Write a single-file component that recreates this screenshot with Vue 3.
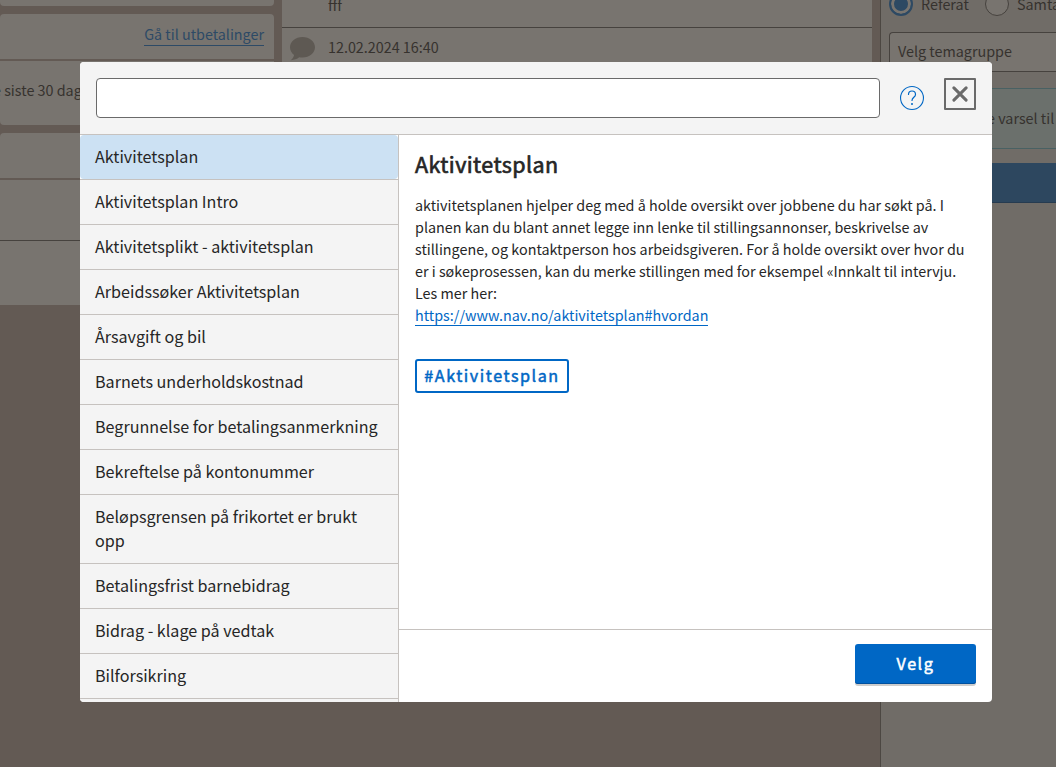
<script setup>
const templates = [
  'Aktivitetsplan',
  'Aktivitetsplan Intro',
  'Aktivitetsplikt - aktivitetsplan',
  'Arbeidssøker Aktivitetsplan',
  'Årsavgift og bil',
  'Barnets underholdskostnad',
  'Begrunnelse for betalingsanmerkning',
  'Bekreftelse på kontonummer',
  'Beløpsgrensen på frikortet er brukt opp',
  'Betalingsfrist barnebidrag',
  'Bidrag - klage på vedtak',
  'Bilforsikring',
  '',
]
</script>

<template>
  <div class="page">
    <div class="left">
      <section class="card stub"></section>
      <section class="card payments">
        <div class="payments-top"><a class="dim-link">Gå til utbetalinger</a></div>
        <div class="payments-body">e siste 30 dager</div>
      </section>
      <section class="card cases">
        <div class="cases-top"></div>
        <div class="cases-row"></div>
      </section>
    </div>
    <div class="middle">
      <div class="msg first">fff</div>
      <div class="msg second">
        <svg class="bubble" width="26" height="24" viewBox="0 0 26 24">
          <path d="M12.500 0C5.600 0 0 4.600 0 10.300c0 3.200 1.600 5.800 4.100 7.700-.3 1.800-1.500 3.800-3.300 5.200 3.500-.2 6.300-1.200 8.400-2.900 1.100.2 2.200.3 3.300.3C19.400 20.600 25 16 25 10.300S19.400 0 12.500 0z" />
        </svg>
        <span>12.02.2024 16:40</span>
      </div>
    </div>
    <div class="right">
      <div class="radios">
        <i class="radio on"></i><span class="r1">Referat</span>
        <i class="radio"></i><span>Samtale</span>
      </div>
      <div class="select">Velg temagruppe</div>
      <div class="alert">e varsel til</div>
      <div class="dim-button"></div>
    </div>
  </div>

  <div class="modal">
    <header class="head">
      <input class="search" type="text" />
      <svg class="help" width="24" height="24" viewBox="0 0 24 24" fill="none" stroke="#0067c5">
        <circle cx="12" cy="12" r="11.450" stroke-width="1.100" />
        <path d="M8.500 8.500C8.500 6.500 10 5 12 5s3.500 1.500 3.500 3.400c0 2.800-3.500 2.900-3.500 6.100" stroke-width="1.200" stroke-linecap="round" />
        <circle cx="12" cy="18" r="1" fill="#0067c5" stroke="none" />
      </svg>
      <button class="close">
        <svg width="16" height="16" viewBox="0 0 16 16" fill="none" stroke="#6a6a6a" stroke-width="3" stroke-linecap="round">
          <path d="M1.900 1.900l12.200 12.200M14.100 1.900L1.900 14.100" />
        </svg>
      </button>
    </header>
    <div class="body">
      <ul class="list">
        <li v-for="(t, i) in templates" :key="i">
          <div class="item" :class="{ active: i === 0 }">{{ t }}</div>
        </li>
      </ul>
      <div class="preview">
        <div class="content">
          <h2>Aktivitetsplan</h2>
          <p>
            aktivitetsplanen hjelper deg med å holde oversikt over jobbene du har søkt på. I<br />
            planen kan du blant annet legge inn lenke til stillingsannonser, beskrivelse av<br />
            stillingene, og kontaktperson hos arbeidsgiveren. For å holde oversikt over hvor du<br />
            er i søkeprosessen, kan du merke stillingen med for eksempel «Innkalt til intervju.<br />
            Les mer her:<br />
            <a class="link">https://www.nav.no/aktivitetsplan#hvordan</a>
          </p>
          <button class="tag">#Aktivitetsplan</button>
        </div>
        <footer class="foot"><button class="choose">Velg</button></footer>
      </div>
    </div>
  </div>
</template>

<style>
body {
  margin: 0;
  background: #635a54;
}
</style>

<style scoped>
* {
  box-sizing: border-box;
}
.page,
.modal,
button {
  font-family: "Source Sans Pro", "Noto Sans CJK SC", "Open Sans", sans-serif;
}
.page {
  width: 1056px;
  height: 767px;
  display: flex;
  gap: 8px;
  overflow: hidden;
  background: #635a54;
  color: #36322e;
  font-size: 14.35px;
  line-height: 22px;
  white-space: nowrap;
}
.left {
  width: 274px;
  flex: none;
  display: flex;
  flex-direction: column;
  gap: 8px;
}
.card {
  background: #78746f;
  border-radius: 4px;
}
.stub {
  height: 6px;
  border-radius: 0 0 4px 4px;
}
.payments {
  height: 111px;
}
.payments-top {
  height: 47px;
  border-bottom: 2px solid #635a54;
  padding: 9px 10px 0;
  text-align: right;
}
.dim-link {
  display: inline-block;
  height: 23px;
  color: #2d4a66;
  border-bottom: 1px solid #2d4a66;
}
.payments-body {
  margin-left: -7px;
  padding-top: 18px;
}
.cases {
  height: 172px;
  border-radius: 4px 4px 0 0;
}
.cases-top {
  height: 47px;
  border-bottom: 2px solid #635a54;
}
.cases-row {
  height: 61px;
  border-bottom: 1px solid #46423e;
}
.middle {
  width: 590px;
  height: 400px;
  flex: none;
  background: #78746f;
}
.msg.first {
  height: 28px;
  padding: 0 0 0 46px;
  line-height: 9px;
  border-bottom: 1px solid #46423e;
}
.msg.second {
  display: flex;
  gap: 12px;
  padding: 8px 0 0 8px;
}
.bubble {
  margin-top: 1px;
  fill: #5e5953;
}
.right {
  flex: 1;
  min-width: 0;
  background: #706c67;
  border-left: 1px solid #4c4742;
}
.radios {
  display: flex;
  align-items: flex-start;
  height: 32px;
  padding-left: 8px;
  line-height: 7px;
}
.radio {
  width: 24px;
  height: 24px;
  margin-top: -8px;
  margin-right: 8px;
  border: 1px solid #46423e;
  border-radius: 50%;
  flex: none;
  background: #78746f;
}
.radio.on {
  border: 2px solid #2d4963;
  background: #2d4963;
  box-shadow: inset 0 0 0 3px #78746f;
}
.r1 {
  width: 64px;
  flex: none;
}
.select {
  height: 40px;
  margin-left: 8px;
  padding: 7px 8px;
  background: #78746f;
  border: 1px solid #46423e;
  border-right: 0;
  border-radius: 4px 0 0 4px;
}
.alert {
  height: 61px;
  margin: 16px 0 14px 8px;
  padding: 18px 0 0 97px;
  background: #6b706c;
  border: 1px solid #496163;
  border-right: 0;
}
.dim-button {
  height: 40px;
  margin-left: 8px;
  background: #2d475f;
  border-bottom: 1px solid #263b50;
}
.modal {
  position: absolute;
  left: 80px;
  top: 62px;
  width: 912px;
  height: 640px;
  display: flex;
  flex-direction: column;
  overflow: hidden;
  background: #fff;
  border-radius: 4px;
  color: #262626;
}
.head {
  height: 73px;
  flex: none;
  display: flex;
  align-items: flex-start;
  padding: 16px;
  background: #f4f4f4;
  border-bottom: 1px solid #c6c2bf;
}
.search {
  width: 784px;
  height: 40px;
  border: 1px solid #6a6a6a;
  border-radius: 4px;
  background: #fff;
}
.help {
  margin: 8px 20px 0;
}
.close {
  width: 32px;
  height: 32px;
  padding: 0;
  display: flex;
  align-items: center;
  justify-content: center;
  border: 2px solid #6a6a6a;
  border-radius: 1px;
  background: #f4f4f4;
}
.body {
  flex: 1;
  min-height: 0;
  display: flex;
}
.list {
  width: 319px;
  margin: 0;
  padding: 0;
  list-style: none;
  overflow: hidden;
  border-right: 1px solid #c6c2bf;
}
.list li {
  border-bottom: 1px solid #c6c2bf;
}
.item {
  min-height: 44px;
  padding: 9px 15px 11px;
  background: #f4f4f4;
  font-size: 16.14px;
  line-height: 24px;
}
.item.active {
  background: #cce1f3;
  border-radius: 4px;
}
.preview {
  flex: 1;
  display: flex;
  flex-direction: column;
}
.content {
  flex: 1;
  padding: 15px 16px;
}
h2 {
  margin: 0;
  font-size: 21.5px;
  line-height: 28px;
  font-weight: 400;
  letter-spacing: 0.42px;
  -webkit-text-stroke: 0.65px currentColor;
}
p {
  margin: 16px 0 0;
  font-size: 14.35px;
  line-height: 22px;
  white-space: nowrap;
}
.link {
  display: inline-block;
  height: 22px;
  line-height: 22px;
  color: #0067c5;
  border-bottom: 1px solid #0067c5;
}
.tag {
  display: block;
  height: 34px;
  width: 154px;
  margin-top: 33px;
  padding: 0 0 2px;
  border: 2px solid #0067c5;
  border-radius: 3px;
  background: #fff;
  color: #0067c5;
  font-size: 16.14px;
  font-weight: 400;
  letter-spacing: 1.550px;
  -webkit-text-stroke: 0.5px currentColor;
}
.foot {
  height: 73px;
  display: flex;
  justify-content: flex-end;
  padding: 14px 16px;
  border-top: 1px solid #c6c2bf;
}
.choose {
  width: 121px;
  height: 40px;
  padding: 0 0 2px;
  border: 0;
  border-radius: 3px;
  background: #0067c5;
  box-shadow: inset 0 -1px 0 #00509e, 0 2px 0 rgba(0, 0, 0, 0.2);
  color: #fff;
  font-size: 16.14px;
  font-weight: 400;
  letter-spacing: 1.550px;
  -webkit-text-stroke: 0.5px currentColor;
}
</style>
